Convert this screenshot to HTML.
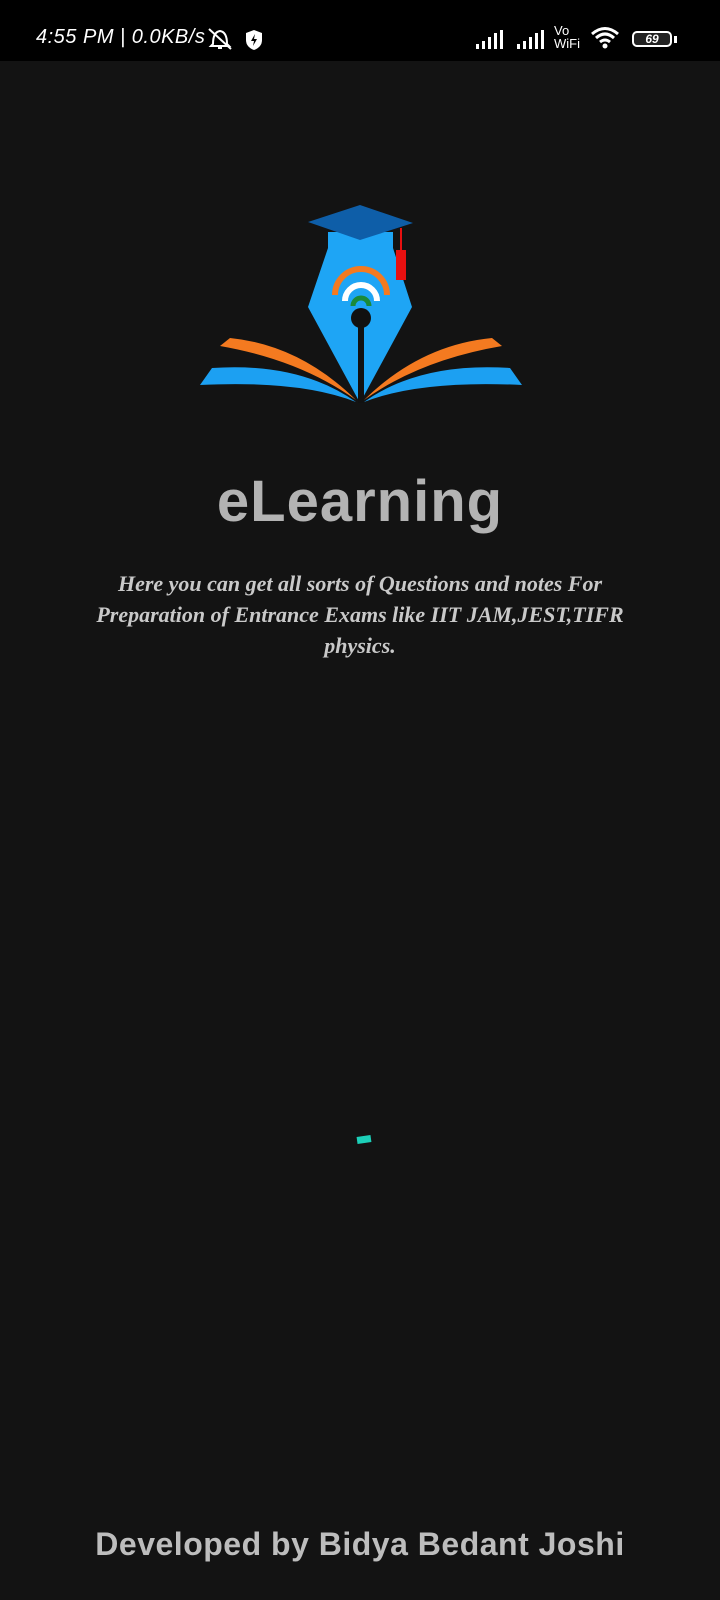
<!DOCTYPE html>
<html><head><meta charset="utf-8"><style>
html,body{margin:0;padding:0;}
body{width:720px;height:1600px;background:#131313;position:relative;overflow:hidden;font-family:"Liberation Sans",sans-serif;}
.sb{position:absolute;left:0;top:0;width:720px;height:61px;background:#000;}
.t{position:absolute;color:#fff;}
</style></head><body>
<div class="sb"></div>
<div class="t" style="left:36px;top:26px;font-size:20px;font-style:italic;letter-spacing:0.5px;">4:55 PM | 0.0KB/s</div>
<svg class="t" style="left:205px;top:26px" width="30" height="26" viewBox="0 0 30 26"><path d="M8 18 Q8 6 15 5 Q22 6 22 18 L24 20 H6 Z M13 22 H17" fill="none" stroke="#fff" stroke-width="2"/><path d="M4 3 L26 23" stroke="#fff" stroke-width="2"/></svg>
<svg class="t" style="left:245px;top:29px" width="18" height="22" viewBox="0 0 18 22"><path d="M9 1 L17 4 V11 Q17 18 9 21 Q1 18 1 11 V4 Z" fill="#fff"/><path d="M10 5 L6 12 H9 L8 17 L12 10 H9 Z" fill="#000"/></svg>
<svg class="t" style="left:476px;top:30px" width="30" height="20"><rect x="0" y="14" width="3" height="5" fill="#fff"/><rect x="6" y="11" width="3" height="8" fill="#fff"/><rect x="12" y="7" width="3" height="12" fill="#fff"/><rect x="18" y="3" width="3" height="16" fill="#fff"/><rect x="24" y="0" width="3" height="19" fill="#fff"/></svg>
<svg class="t" style="left:517px;top:30px" width="30" height="20"><rect x="0" y="14" width="3" height="5" fill="#fff"/><rect x="6" y="11" width="3" height="8" fill="#fff"/><rect x="12" y="7" width="3" height="12" fill="#fff"/><rect x="18" y="3" width="3" height="16" fill="#fff"/><rect x="24" y="0" width="3" height="19" fill="#fff"/></svg>
<div class="t" style="left:554px;top:24px;font-size:13px;line-height:13px;">Vo<br>WiFi</div>
<svg class="t" style="left:590px;top:26px" width="30" height="24" viewBox="0 0 30 24"><path d="M2 8 Q15 -3 28 8" fill="none" stroke="#fff" stroke-width="3"/><path d="M6 12 Q15 4 24 12" fill="none" stroke="#fff" stroke-width="3"/><path d="M10 16 Q15 12 20 16" fill="none" stroke="#fff" stroke-width="3"/><circle cx="15" cy="20" r="2.5" fill="#fff"/></svg>
<div class="t" style="left:632px;top:31px;width:40px;height:16px;border:2px solid #fff;border-radius:5px;box-sizing:border-box;background:#222;font-size:12px;font-style:italic;text-align:center;line-height:13px;font-weight:bold;">69</div>
<div class="t" style="left:674px;top:36px;width:3px;height:7px;background:#fff;"></div>

<svg style="position:absolute;left:0;top:0" width="720" height="420">
<path d="M220 346 L230 338 Q300 345 356 400 Q300 360 220 346 Z" fill="#f47a20"/>
<path d="M200 385 L212 368 Q300 362 356 402 Q300 380 200 385 Z" fill="#1ca0f2"/>
<path d="M502 346 L492 338 Q420 345 364 400 Q420 360 502 346 Z" fill="#f47a20"/>
<path d="M522 385 L510 368 Q420 362 364 402 Q420 380 522 385 Z" fill="#1ca0f2"/>
<path d="M328 232 H393 V248 L412 307 L360 403 L308 307 L328 248 Z" fill="#1ea5f5"/>
<path d="M308 222 L360 205 L413 223 L360 240 Z" fill="#0e5ea8"/>
<path d="M335 295 A26 26 0 0 1 387 295" fill="none" stroke="#f47a20" stroke-width="6"/>
<path d="M345 301 A16 16 0 0 1 377 301" fill="none" stroke="#fff" stroke-width="6"/>
<path d="M353 306 A8 8 0 0 1 369 306" fill="none" stroke="#1a8a3a" stroke-width="5"/>
<circle cx="361" cy="318" r="10" fill="#111"/>
<rect x="358" y="318" width="6" height="85" fill="#111"/>
<rect x="400" y="228" width="2" height="24" fill="#e81010"/>
<path d="M396 250 H406 V280 H396 Z" fill="#e81010"/>
</svg>

<div style="position:absolute;left:0;width:720px;top:468px;text-align:center;font-size:58px;font-weight:bold;color:#b3b3b3;letter-spacing:1px;">eLearning</div>
<div style="position:absolute;left:80px;width:560px;top:568px;text-align:center;font-family:'Liberation Serif',serif;font-style:italic;font-weight:bold;font-size:22px;line-height:31px;color:#c9c9c9;">Here you can get all sorts of Questions and notes For<br>Preparation of Entrance Exams like IIT JAM,JEST,TIFR<br>physics.</div>
<div style="position:absolute;left:357px;top:1136px;width:14px;height:7px;background:#1ccfb8;transform:rotate(-8deg);"></div>
<div style="position:absolute;left:0;width:720px;top:1526px;text-align:center;font-size:32px;font-weight:bold;color:#bdbdbd;letter-spacing:0.5px;">Developed by Bidya Bedant Joshi</div>
</body></html>
